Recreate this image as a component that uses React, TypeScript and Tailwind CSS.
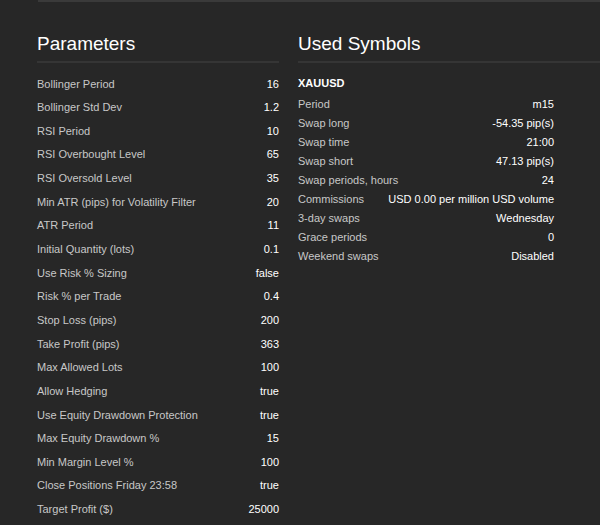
const params: [string, string][] = [
  ["Bollinger Period", "16"],
  ["Bollinger Std Dev", "1.2"],
  ["RSI Period", "10"],
  ["RSI Overbought Level", "65"],
  ["RSI Oversold Level", "35"],
  ["Min ATR (pips) for Volatility Filter", "20"],
  ["ATR Period", "11"],
  ["Initial Quantity (lots)", "0.1"],
  ["Use Risk % Sizing", "false"],
  ["Risk % per Trade", "0.4"],
  ["Stop Loss (pips)", "200"],
  ["Take Profit (pips)", "363"],
  ["Max Allowed Lots", "100"],
  ["Allow Hedging", "true"],
  ["Use Equity Drawdown Protection", "true"],
  ["Max Equity Drawdown %", "15"],
  ["Min Margin Level %", "100"],
  ["Close Positions Friday 23:58", "true"],
  ["Target Profit ($)", "25000"],
];

const symbols: [string, string][] = [
  ["Period", "m15"],
  ["Swap long", "-54.35 pip(s)"],
  ["Swap time", "21:00"],
  ["Swap short", "47.13 pip(s)"],
  ["Swap periods, hours", "24"],
  ["Commissions", "USD 0.00 per million USD volume"],
  ["3-day swaps", "Wednesday"],
  ["Grace periods", "0"],
  ["Weekend swaps", "Disabled"],
];

export default function App() {
  return (
    <div
      className="w-[600px] h-[525px] overflow-hidden bg-[#272727] text-[11px]"
      style={{ fontFamily: '"Liberation Sans", Arial, sans-serif' }}
    >
      <div className="ml-[38px] h-[2px] bg-[#3a3a3a]" />
      <div className="flex pl-[37px] pt-[29px]">
        <div className="w-[242px]">
          <h2 className="text-[19px] leading-[26px] text-white border-b-2 border-[#353535] pb-[4px]">Parameters</h2>
          <div className="pt-[9px]">
            {params.map(([k, v]) => (
              <div key={k} className="flex justify-between h-[23.65px] items-center">
                <span className="text-[#c8c8c8]">{k}</span>
                <span className="text-white">{v}</span>
              </div>
            ))}
          </div>
        </div>
        <div className="ml-[19px] flex-1">
          <h2 className="text-[19px] leading-[26px] text-white border-b-2 border-[#353535] pb-[4px]">Used Symbols</h2>
          <div className="w-[256px] pt-[9px]">
            <div className="h-[23px] flex items-center font-bold text-white">XAUUSD</div>
            {symbols.map(([k, v]) => (
              <div key={k} className="flex justify-between h-[19px] items-center">
                <span className="text-[#c8c8c8]">{k}</span>
                <span className="text-white">{v}</span>
              </div>
            ))}
          </div>
        </div>
      </div>
    </div>
  );
}
